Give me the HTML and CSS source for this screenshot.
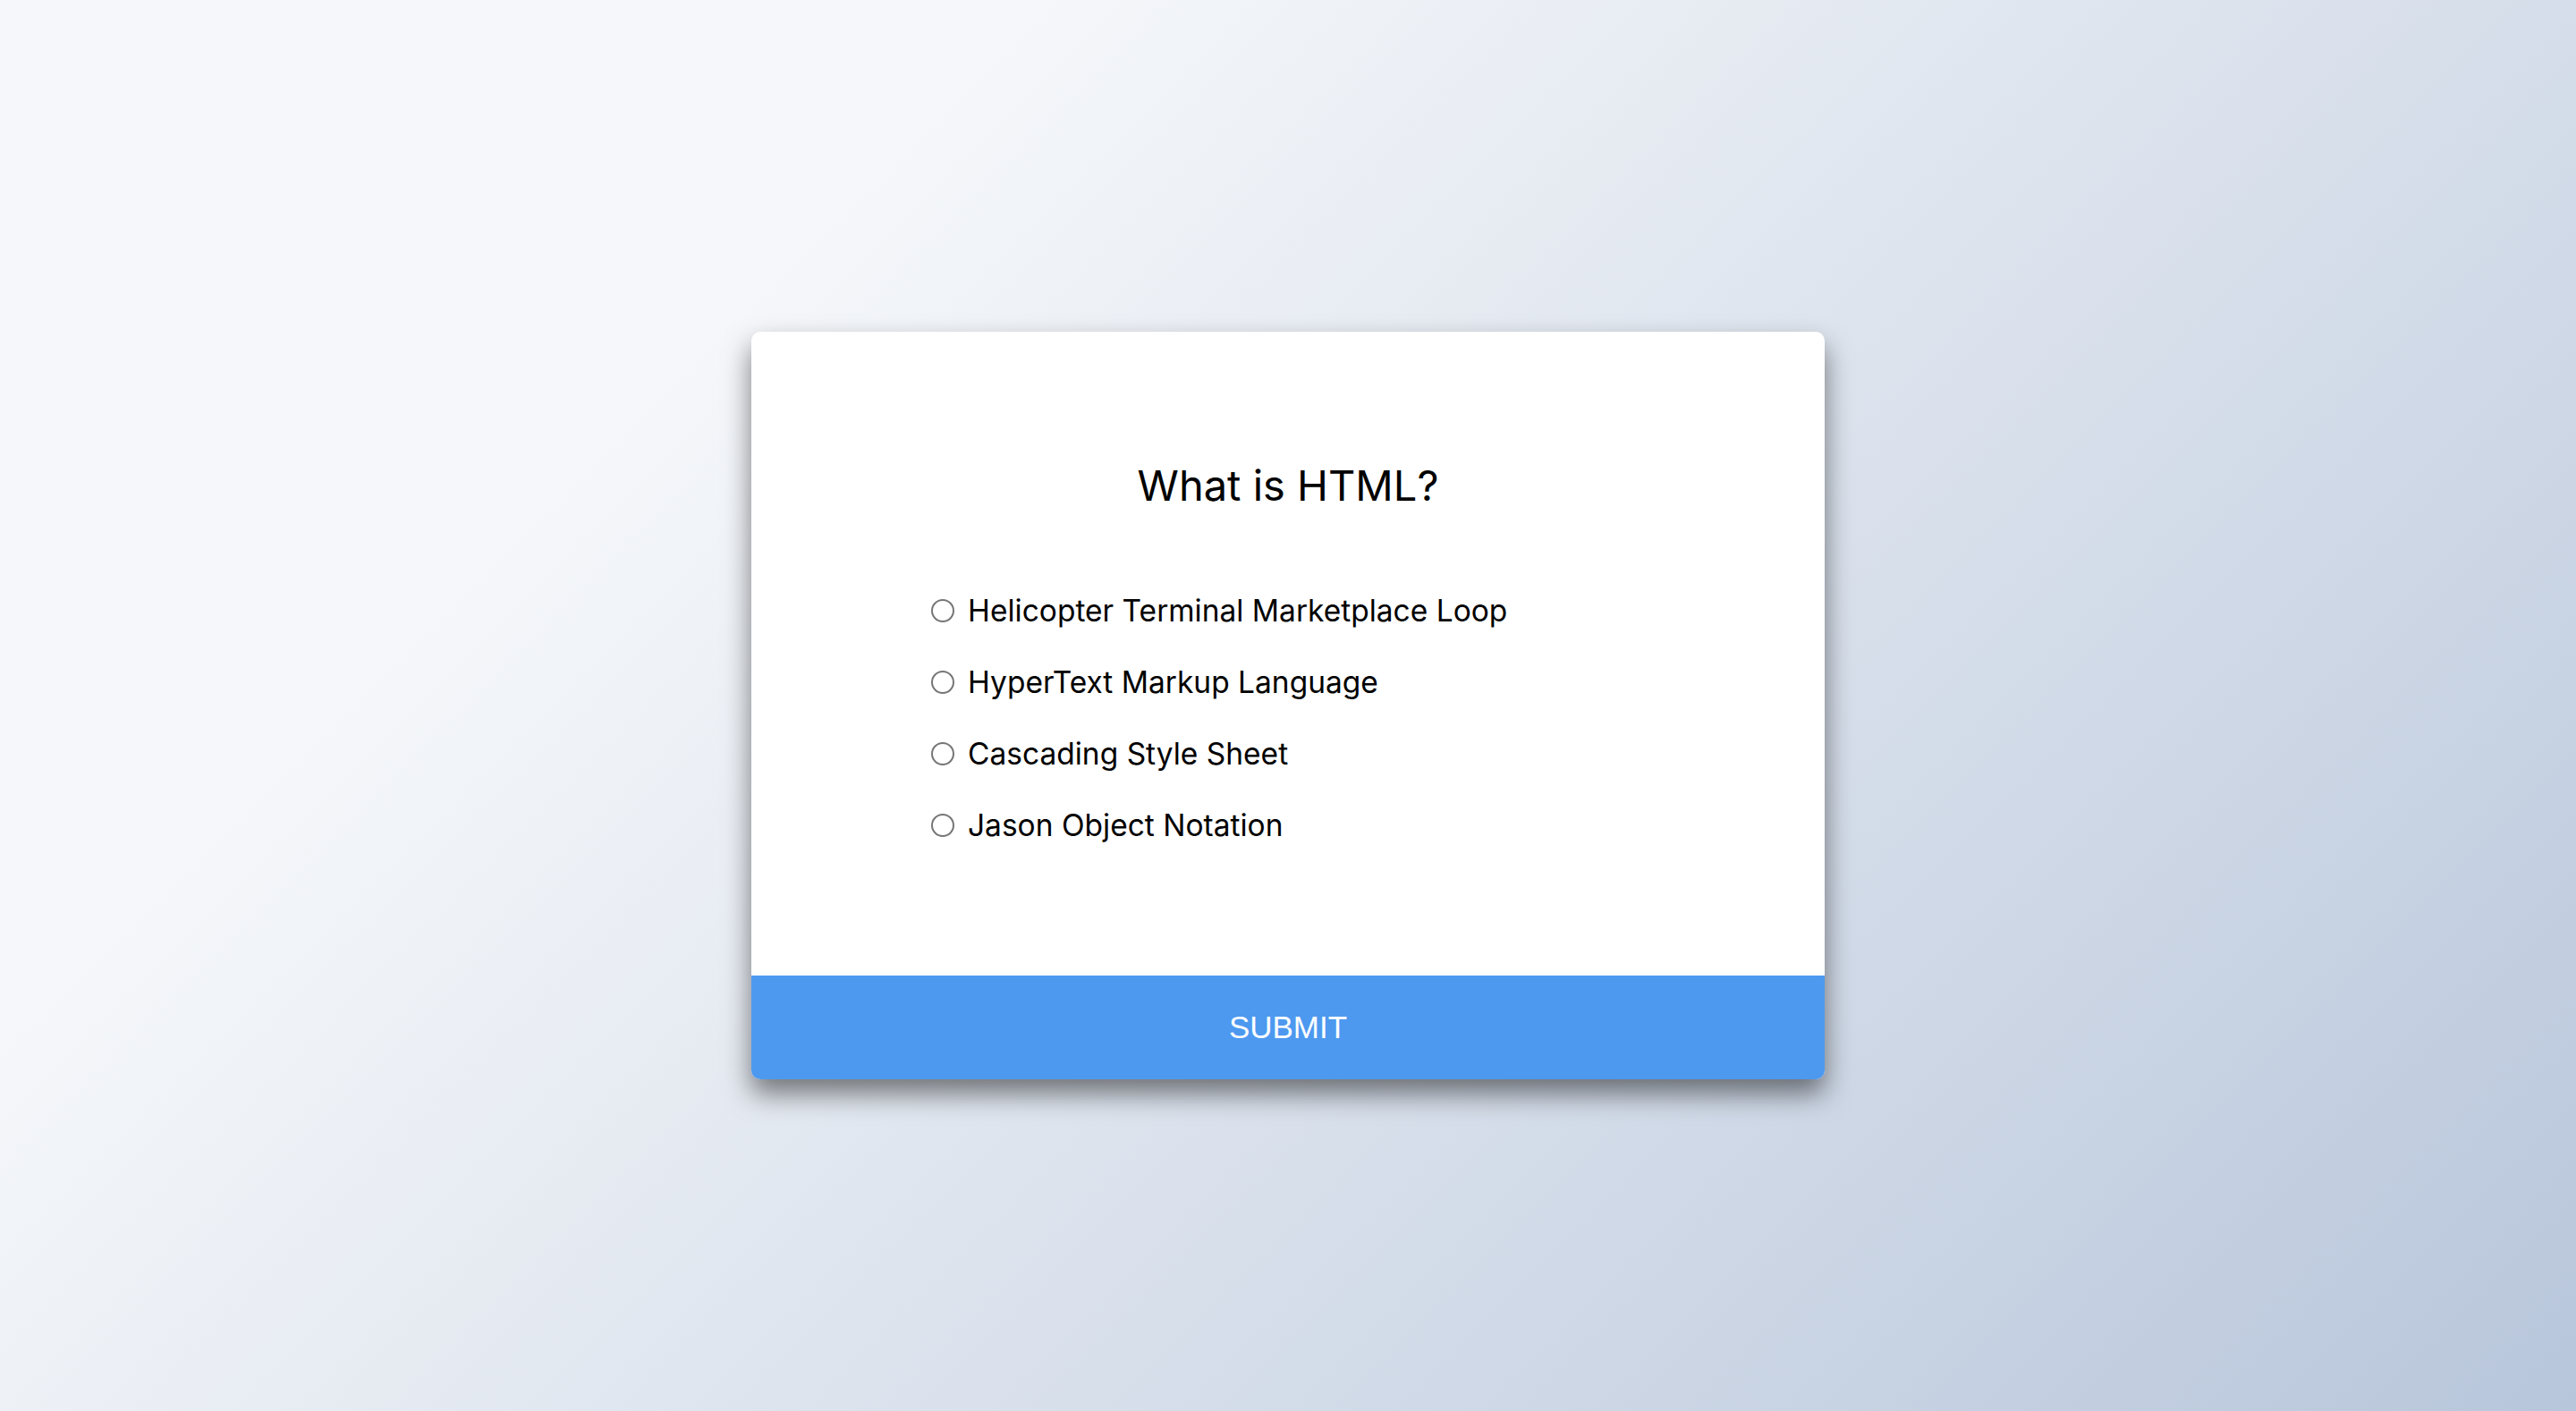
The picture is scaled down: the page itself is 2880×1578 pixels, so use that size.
FILE: index.html
```html
<!DOCTYPE html>
<html lang="en">
<head>
<meta charset="utf-8">
<title>Quiz</title>
<link rel="stylesheet" href="styles.css">
</head>
<body>
  <div class="quiz-container">
    <div class="quiz-header">
      <h2 class="question">What is HTML?</h2>
      <ul class="answers">
        <li class="answer"><label class="answer-label"><input type="radio" name="answer" class="radio"><span>Helicopter Terminal Marketplace Loop</span></label></li>
        <li class="answer"><label class="answer-label"><input type="radio" name="answer" class="radio"><span>HyperText Markup Language</span></label></li>
        <li class="answer"><label class="answer-label"><input type="radio" name="answer" class="radio"><span>Cascading Style Sheet</span></label></li>
        <li class="answer"><label class="answer-label"><input type="radio" name="answer" class="radio"><span>Jason Object Notation</span></label></li>
      </ul>
    </div>
    <button class="submit">SUBMIT</button>
  </div>
</body>
</html>
```

FILE: styles.css
```css
* { box-sizing: border-box; }

html, body { height: 100%; }

body {
  margin: 0;
  background-color: #b8c6db;
  background-image: linear-gradient(315deg, #b8c6db 0%, #f5f7fa 74%);
  font-family: "Inter", "Noto Sans", sans-serif;
  display: flex;
  align-items: center;
  justify-content: center;
  overflow: hidden;
}

.quiz-container {
  width: 1200px;
  height: 836px;
  background: #fff;
  border-radius: 10px;
  overflow: hidden;
  box-shadow: 0 16px 30px rgba(0, 0, 0, 0.5);
  display: flex;
  flex-direction: column;
}

.quiz-header {
  flex: 1;
  padding: 142px 128px 0 128px;
}

.question {
  margin: 0;
  text-align: center;
  font-weight: 400;
  font-size: 47px;
  line-height: 60px;
  color: #000;
}

.answers {
  list-style: none;
  margin: 86px 0 0 0;
  padding: 0 0 0 73px;
}

.answer {
  font-size: 33.5px;
  line-height: 48px;
  margin: 0 0 32px 0;
  color: #000;
}

.answer-label {
  display: flex;
  align-items: center;
  gap: 15px;
  cursor: pointer;
}

.radio {
  appearance: none;
  -webkit-appearance: none;
  margin: 0;
  width: 26px;
  height: 26px;
  border: 2px solid #767676;
  border-radius: 50%;
  background: #fff;
  flex: none;
}

.submit {
  display: block;
  width: 100%;
  height: 116px;
  border: none;
  background: #4d99f0;
  color: #fff;
  font-family: "Liberation Sans", Arial, sans-serif;
  font-size: 35px;
  cursor: pointer;
}
```
